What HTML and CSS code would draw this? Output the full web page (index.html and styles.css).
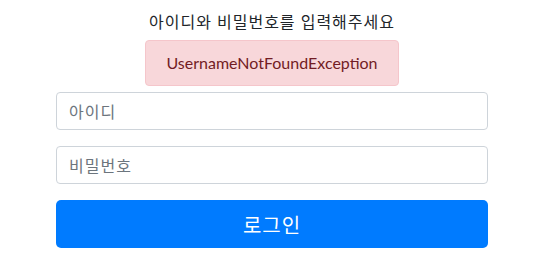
FILE: index.html
```html
<!DOCTYPE html>
<html lang="ko">
<head>
  <meta charset="UTF-8">
  <title>로그인</title>
  <link rel="stylesheet" href="styles.css">
</head>
<body>
  <div class="login">
    <p class="title">아이디와 비밀번호를 입력해주세요</p>
    <div class="alert-wrap">
      <div class="alert">UsernameNotFoundException</div>
    </div>
    <form id="loginForm">
      <input type="text" name="username" placeholder="아이디">
      <input type="password" name="password" placeholder="비밀번호">
      <button type="submit">로그인</button>
    </form>
  </div>
</body>
</html>
```

FILE: styles.css
```css
body {
  font-family: "Lato", "Noto Sans CJK KR", sans-serif;
  margin: 0;
  padding: 10px 0 0 3px;
  background-color: #fff;
  color: #212529;
  font-size: 16px;
  line-height: 1.5;
}
.login {
  width: 432px;
  margin: 0 auto;
}
.title {
  text-align: center;
  margin: 0 0 6px;
  letter-spacing: 1px;
}
.alert-wrap {
  text-align: center;
  margin-bottom: 6px;
}
.alert {
  display: inline-block;
  padding: 10px 20px;
  background-color: #f8d7da;
  border: 1px solid #f5c6cb;
  border-radius: 4px;
  color: #721c24;
}
input {
  display: block;
  box-sizing: border-box;
  width: 100%;
  height: 38px;
  padding: 6px 12px;
  margin: 0 0 16px;
  border: 1px solid #ced4da;
  border-radius: 4px;
  font-family: inherit;
  font-size: 16px;
  letter-spacing: 1px;
  color: #495057;
}
input::placeholder {
  color: #6c757d;
}
button {
  display: block;
  width: 100%;
  height: 48px;
  background-color: #007bff;
  color: #fff;
  border: none;
  border-radius: 5px;
  font-family: inherit;
  font-size: 20px;
  letter-spacing: 1px;
  cursor: pointer;
}
```
